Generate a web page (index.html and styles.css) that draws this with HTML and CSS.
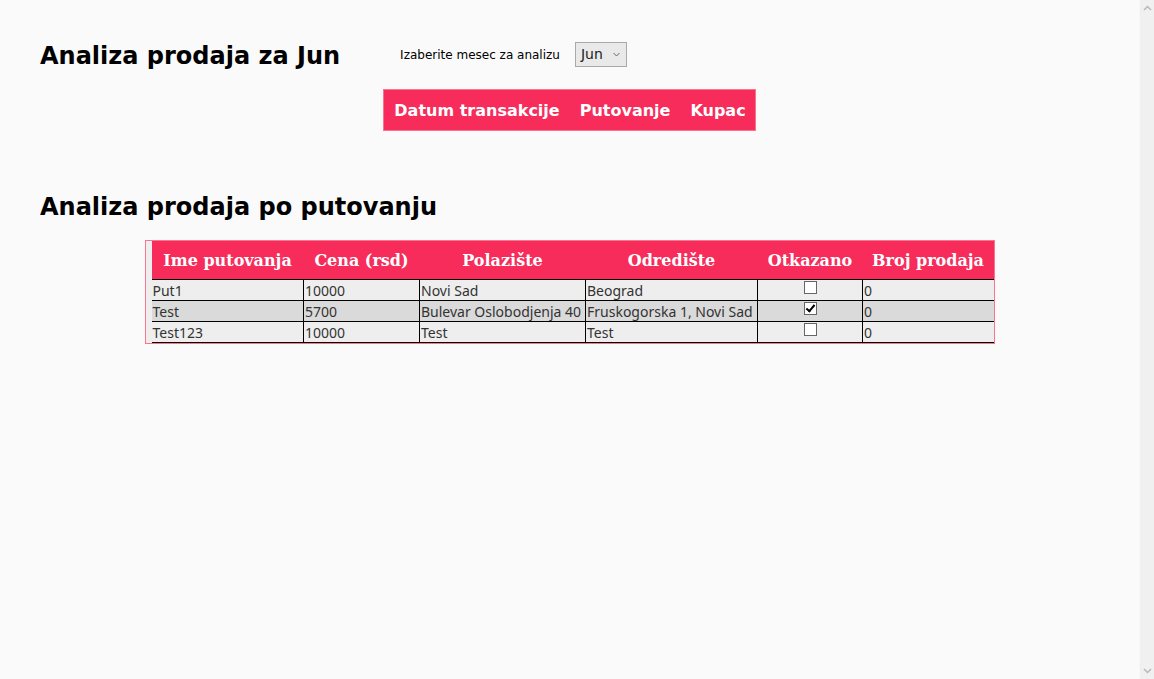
FILE: index.html
```html
<!DOCTYPE html>
<html>
<head>
<meta charset="utf-8">
<link rel="stylesheet" href="styles.css">
</head>
<body>
<div class="page">
  <div class="top">
    <h2 class="title">Analiza prodaja za Jun</h2>
    <div class="picker">
      <span class="label">Izaberite mesec za analizu</span>
      <span class="select">Jun
        <svg class="caret" width="7" height="5" viewBox="0 0 7 5"><path d="M0.5 1 L3.5 4 L6.5 1" fill="none" stroke="#666" stroke-width="1"/></svg>
      </span>
    </div>
  </div>
  <div class="navwrap">
    <nav class="nav">
      <span>Datum transakcije</span>
      <span>Putovanje</span>
      <span>Kupac</span>
    </nav>
  </div>
  <h2 class="title second">Analiza prodaja po putovanju</h2>
  <div class="tablewrap">
    <div class="tableframe">
      <table class="trips">
        <thead>
          <tr>
            <th class="c1">Ime putovanja</th>
            <th class="c2">Cena (rsd)</th>
            <th class="c3">Polazište</th>
            <th class="c4">Odredište</th>
            <th class="c5">Otkazano</th>
            <th class="c6">Broj prodaja</th>
          </tr>
        </thead>
        <tbody>
          <tr class="odd">
            <td>Put1</td><td>10000</td><td>Novi Sad</td><td>Beograd</td>
            <td class="chk"><span class="box"></span></td><td>0</td>
          </tr>
          <tr class="even">
            <td>Test</td><td>5700</td><td>Bulevar Oslobodjenja 40</td><td>Fruskogorska 1, Novi Sad</td>
            <td class="chk"><span class="box checked"></span></td><td>0</td>
          </tr>
          <tr class="odd">
            <td>Test123</td><td>10000</td><td>Test</td><td>Test</td>
            <td class="chk"><span class="box"></span></td><td>0</td>
          </tr>
        </tbody>
      </table>
    </div>
  </div>
</div>
<div class="scrollbar">
  <svg class="arrow up" width="9" height="6" viewBox="0 0 9 6"><path d="M1 5 L4.5 1.5 L8 5" fill="none" stroke="#b8b8b8" stroke-width="1.5"/></svg>
  <svg class="arrow down" width="9" height="6" viewBox="0 0 9 6"><path d="M1 1 L4.5 4.5 L8 1" fill="none" stroke="#b8b8b8" stroke-width="1.5"/></svg>
</div>
</body>
</html>
```
FILE: styles.css
```css
html {
  background: #fafafa;
}
body {
  margin: 0;
  background: #fafafa;
  font-family: "DejaVu Sans", Verdana, sans-serif;
  color: #000;
}
.page {
  width: 1139px;
  box-sizing: border-box;
  padding: 0 0 0 40px;
}
.top {
  display: flex;
  align-items: flex-start;
  padding-top: 42px;
}
.title {
  margin: 0;
  font-size: 24px;
  font-weight: bold;
  line-height: 28px;
  font-family: "DejaVu Sans", Verdana, sans-serif;
}
.picker {
  display: flex;
  align-items: center;
  margin-left: 60px;
}
.label {
  font-size: 12px;
  line-height: 20px;
}
.select {
  margin-left: 15px;
  width: 52px;
  height: 25px;
  box-sizing: border-box;
  border: 1px solid #a9a9a9;
  background: #e9e9e9;
  font-family: "DejaVu Sans", Verdana, sans-serif;
  font-size: 14px;
  line-height: 23px;
  padding-left: 5px;
  color: #222;
  display: flex;
  align-items: center;
  justify-content: space-between;
}
.caret {
  margin-right: 6px;
}
.navwrap {
  display: flex;
  justify-content: center;
  margin-left: -40px;
  margin-top: 19px;
}
.nav {
  display: flex;
  gap: 20px;
  background: #f72c5b;
  border: 1px solid #f9748f;
  padding: 0 9px 0 10px;
  height: 40px;
  align-items: center;
  color: #fff;
  font-weight: bold;
  font-size: 16px;
  font-family: "DejaVu Sans", Verdana, sans-serif;
}
.second {
  margin-top: 62px;
}
.tablewrap {
  display: flex;
  justify-content: center;
  margin-left: -40px;
  margin-top: 19px;
}
.tableframe {
  border: 1px solid #f9748f;
  background: #eeeeee;
  padding-left: 6px;
}
.trips {
  border-collapse: collapse;
  font-family: "Noto Sans", "Open Sans", sans-serif;
}
.trips th {
  background: #f72c5b;
  color: #fff;
  font-family: "DejaVu Serif", Georgia, serif;
  font-weight: bold;
  font-size: 16px;
  height: 38px;
  padding: 0;
  text-align: center;
  white-space: nowrap;
}
.c1 { width: 152px; }
.c2 { width: 116px; }
.c3 { width: 166px; }
.c4 { width: 172px; }
.c5 { width: 105px; }
.c6 { width: 131px; }
.trips td {
  border: 1px solid #000;
  font-size: 14px;
  color: #333;
  height: 20px;
  padding: 0 0 0 1px;
  line-height: 19px;
  white-space: nowrap;
  vertical-align: middle;
}
.trips tr td:first-child { border-left: none; }
.trips tr td:last-child { border-right: none; }
.trips tr.odd td { background: #eeeeee; }
.trips tr.even td { background: #dadada; }
.trips td.chk {
  text-align: center;
  vertical-align: top;
  padding: 0;
}
.box {
  display: inline-block;
  width: 11px;
  height: 11px;
  border: 1px solid #666;
  background: #fff;
  margin-top: 1px;
  position: relative;
  vertical-align: top;
}
.box.checked::after {
  content: "";
  position: absolute;
  left: 3px;
  top: 0;
  width: 3px;
  height: 7px;
  border-right: 2px solid #000;
  border-bottom: 2px solid #000;
  transform: rotate(40deg);
}
.scrollbar {
  position: fixed;
  top: 0;
  right: 0;
  width: 15px;
  height: 100%;
  background: #f0f0f0;
  border-left: 1px solid #f7f7f7;
  box-sizing: border-box;
}
.arrow {
  position: absolute;
  left: 3px;
}
.arrow.up { top: 5px; }
.arrow.down { bottom: 5px; }
```
